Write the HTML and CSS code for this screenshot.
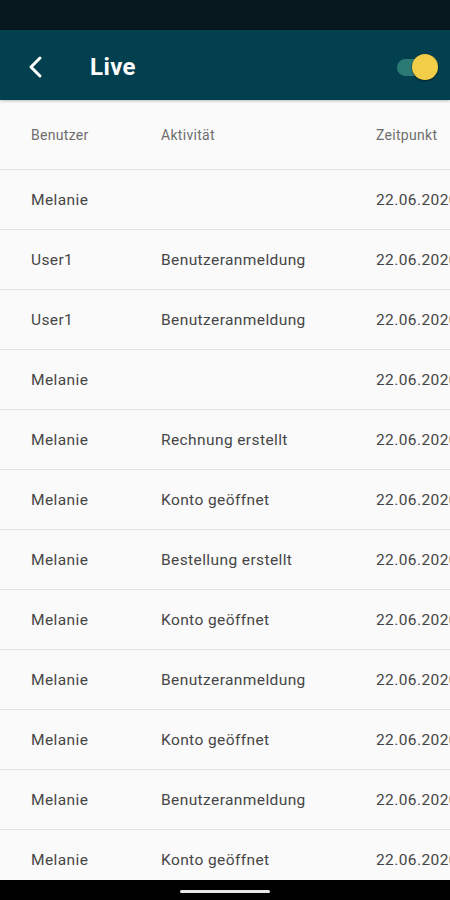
FILE: index.html
```html
<!DOCTYPE html>
<html>
<head>
<meta charset="utf-8">
<link rel="stylesheet" href="styles.css">
</head>
<body>
<div class="screen">
  <div class="statusbar"></div>
  <div class="appbar">
    <svg class="back" width="24" height="24" viewBox="0 0 24 24"><path d="M15 3 L6 12 L15 21" fill="none" stroke="#fff" stroke-width="3" stroke-linecap="round" stroke-linejoin="round"/></svg>
    <div class="title">Live</div>
    <div class="toggle"><div class="track"></div><div class="thumb"></div></div>
  </div>
  <div class="content">
    <div class="row head"><span class="c1">Benutzer</span><span class="c2">Aktivität</span><span class="c3">Zeitpunkt</span></div>
    <div class="row"><span class="c1">Melanie</span><span class="c2"></span><span class="c3">22.06.2020</span></div>
    <div class="row"><span class="c1">User1</span><span class="c2">Benutzeranmeldung</span><span class="c3">22.06.2020</span></div>
    <div class="row"><span class="c1">User1</span><span class="c2">Benutzeranmeldung</span><span class="c3">22.06.2020</span></div>
    <div class="row"><span class="c1">Melanie</span><span class="c2"></span><span class="c3">22.06.2020</span></div>
    <div class="row"><span class="c1">Melanie</span><span class="c2">Rechnung erstellt</span><span class="c3">22.06.2020</span></div>
    <div class="row"><span class="c1">Melanie</span><span class="c2">Konto geöffnet</span><span class="c3">22.06.2020</span></div>
    <div class="row"><span class="c1">Melanie</span><span class="c2">Bestellung erstellt</span><span class="c3">22.06.2020</span></div>
    <div class="row"><span class="c1">Melanie</span><span class="c2">Konto geöffnet</span><span class="c3">22.06.2020</span></div>
    <div class="row"><span class="c1">Melanie</span><span class="c2">Benutzeranmeldung</span><span class="c3">22.06.2020</span></div>
    <div class="row"><span class="c1">Melanie</span><span class="c2">Konto geöffnet</span><span class="c3">22.06.2020</span></div>
    <div class="row"><span class="c1">Melanie</span><span class="c2">Benutzeranmeldung</span><span class="c3">22.06.2020</span></div>
    <div class="row"><span class="c1">Melanie</span><span class="c2">Konto geöffnet</span><span class="c3">22.06.2020</span></div>
  </div>
  <div class="navbar"><div class="pill"></div></div>
</div>
</body>
</html>
```
FILE: styles.css
```css
html, body { margin: 0; padding: 0; }
body { font-family: Roboto, "Noto Sans", sans-serif; background: #fafafa; }
.screen { width: 450px; height: 900px; display: flex; flex-direction: column; overflow: hidden; }
.statusbar { height: 30px; background: #07191f; flex: none; }
.appbar { height: 70px; box-sizing: border-box; padding-top: 3px; background: #03404f; flex: none; display: flex; align-items: center; box-shadow: 0 1px 3px rgba(0,0,0,0.25); position: relative; z-index: 1; }
.back { margin-left: 25px; width: 24px; height: 24px; }
.title { margin-left: 41px; color: #fff; font-size: 24px; font-weight: 700; letter-spacing: 0.4px; }
.toggle { margin-left: auto; margin-right: 11px; width: 46px; height: 28px; position: relative; }
.track { position: absolute; left: 4px; top: 6px; width: 34px; height: 17px; border-radius: 9px; background: #2c7a76; }
.thumb { position: absolute; left: 19px; top: 1px; width: 26px; height: 26px; border-radius: 50%; background: #f2cd48; box-shadow: 0 1px 2px rgba(0,0,0,0.5); }
.content { flex: 1; overflow: hidden; background: #fafafa; }
.row { height: 59px; border-bottom: 1px solid #e2e2e2; display: flex; align-items: center; font-size: 15.5px; letter-spacing: 0.4px; color: #464646; white-space: nowrap; }
.row.head { height: 69px; font-size: 14px; letter-spacing: 0.3px; color: #6e6e6e; }
.c1 { width: 130px; padding-left: 31px; flex: none; }
.c2 { width: 215px; flex: none; }
.c3 { flex: none; }
.navbar { height: 20px; background: #000; flex: none; display: flex; justify-content: center; align-items: center; }
.pill { width: 90px; height: 3px; border-radius: 2px; background: #e8e8e8; margin-top: 2px; }
```
